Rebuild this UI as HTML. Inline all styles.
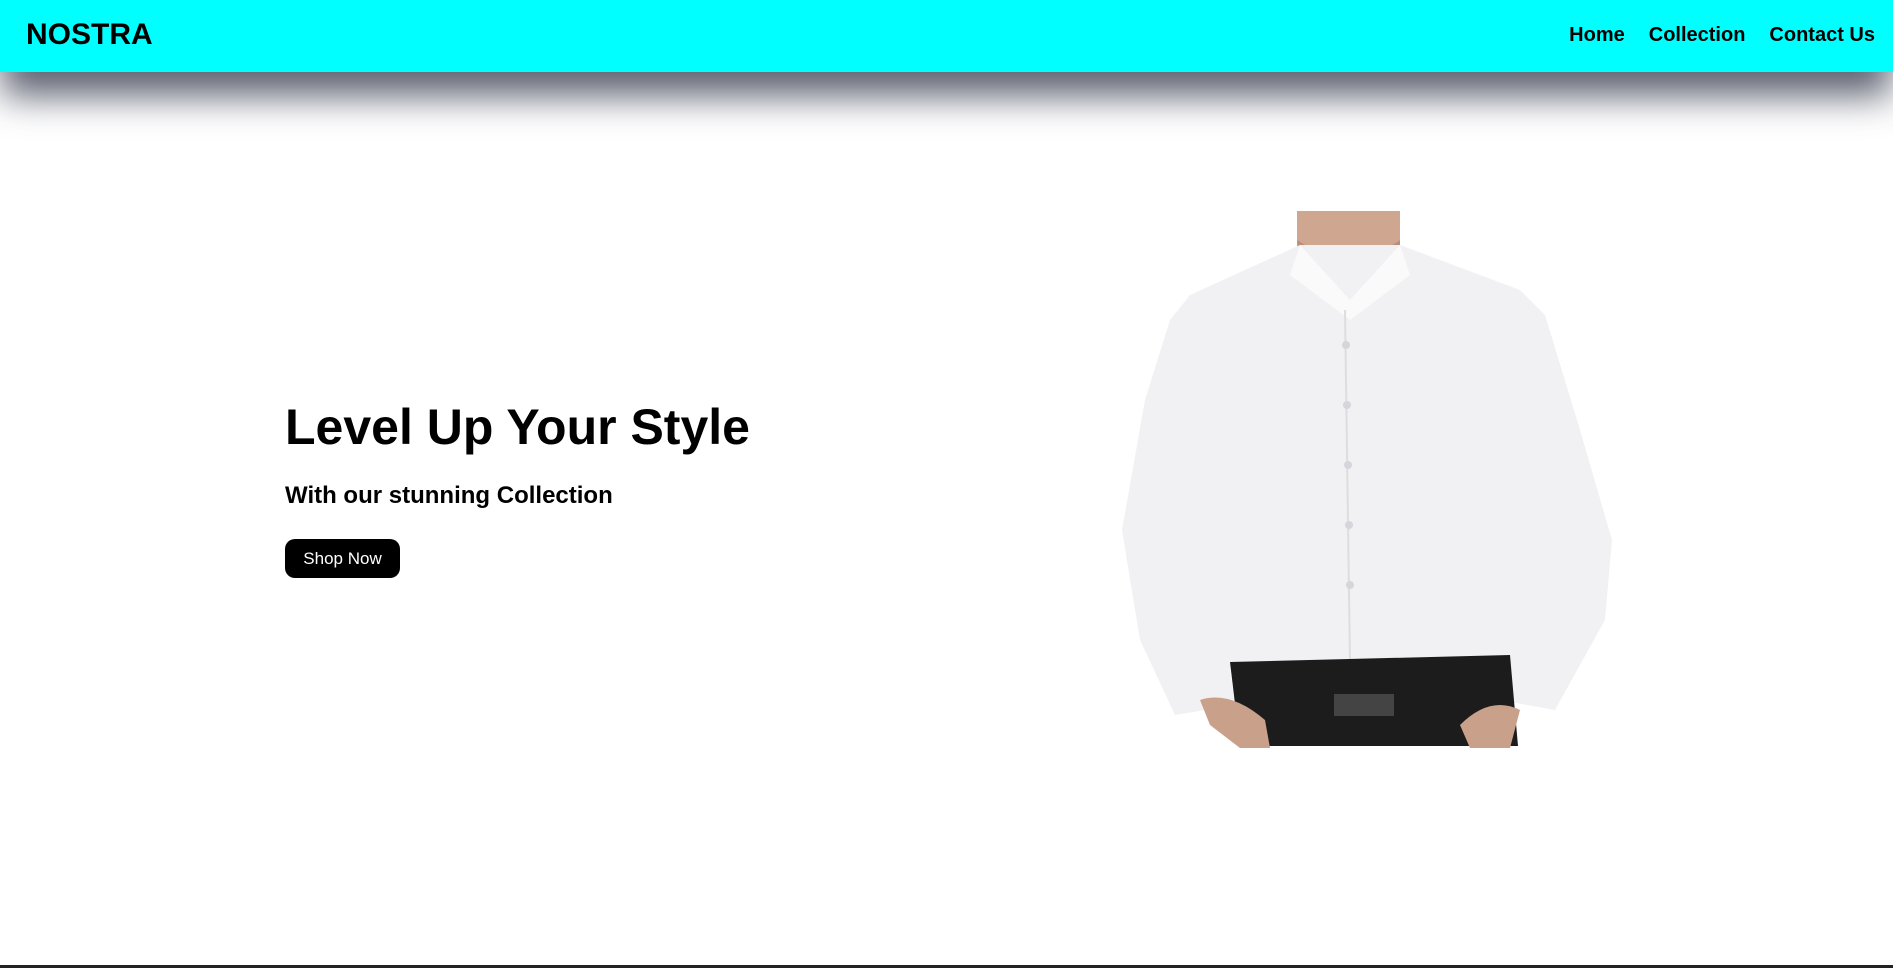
<!DOCTYPE html>
<html><head><meta charset="utf-8"><style>
*{margin:0;padding:0;box-sizing:border-box}
html,body{width:1893px;height:968px;overflow:hidden;background:#fff;font-family:"Liberation Sans",Arial,sans-serif;color:#000}
header{position:absolute;left:0;top:0;width:1893px;height:72px;background:#00ffff;box-shadow:0 26px 36px -2px rgba(40,45,65,0.75);z-index:2}
.logo{position:absolute;left:26px;top:18px;font-size:30px;font-weight:bold}
nav{position:absolute;right:18px;top:24px;font-size:20px;font-weight:bold}
nav span{margin-left:24px}
h1{position:absolute;left:285px;top:398px;font-size:50px;font-weight:bold;white-space:nowrap}
h2{position:absolute;left:285px;top:482px;font-size:24px;font-weight:bold;white-space:nowrap}
.btn{position:absolute;left:285px;top:539px;width:115px;height:39px;background:#000;color:#fff;border-radius:10px;font-size:17px;text-align:center;line-height:39px}
svg{position:absolute;left:1100px;top:200px}
.bot{position:absolute;left:0;top:965px;width:1893px;height:3px;background:#222}
</style></head><body>
<header><div class="logo">NOSTRA</div><nav><span>Home</span><span>Collection</span><span>Contact Us</span></nav></header>
<h1>Level Up Your Style</h1>
<h2>With our stunning Collection</h2>
<div class="btn">Shop Now</div>
<svg width="540" height="560" viewBox="0 0 540 560">
<rect x="197" y="11" width="103" height="60" fill="#cfa68f"/>
<path d="M197 40 Q250 75 300 40 L300 60 Q250 90 200 60Z" fill="#b88f7a"/>
<path d="M200 45 L300 45 L420 90 L445 115 L480 230 L512 340 L505 420 L455 510 L400 500 L405 470 L400 465 L135 465 L130 470 L135 505 L75 515 L40 440 L22 330 L45 200 L70 120 L90 95Z" fill="#f1f1f3"/>
<path d="M200 45 L250 100 L300 45 L310 75 L250 120 L190 75Z" fill="#fafafa"/>
<path d="M245 110 L250 462" stroke="#ddd" stroke-width="2" fill="none"/>
<g fill="#d5d5dc"><circle cx="246" cy="145" r="4"/><circle cx="247" cy="205" r="4"/><circle cx="248" cy="265" r="4"/><circle cx="249" cy="325" r="4"/><circle cx="250" cy="385" r="4"/></g>
<path d="M130 462 L410 455 L418 546 L140 546Z" fill="#1c1c1c"/>
<rect x="234" y="494" width="60" height="22" fill="#444"/>
<path d="M100 500 Q130 490 165 520 L170 548 L140 548 L110 525Z" fill="#c9a08a"/>
<path d="M360 525 Q390 495 420 510 L410 548 L370 548Z" fill="#c9a08a"/>
</svg>
<div class="bot"></div>
</body></html>
